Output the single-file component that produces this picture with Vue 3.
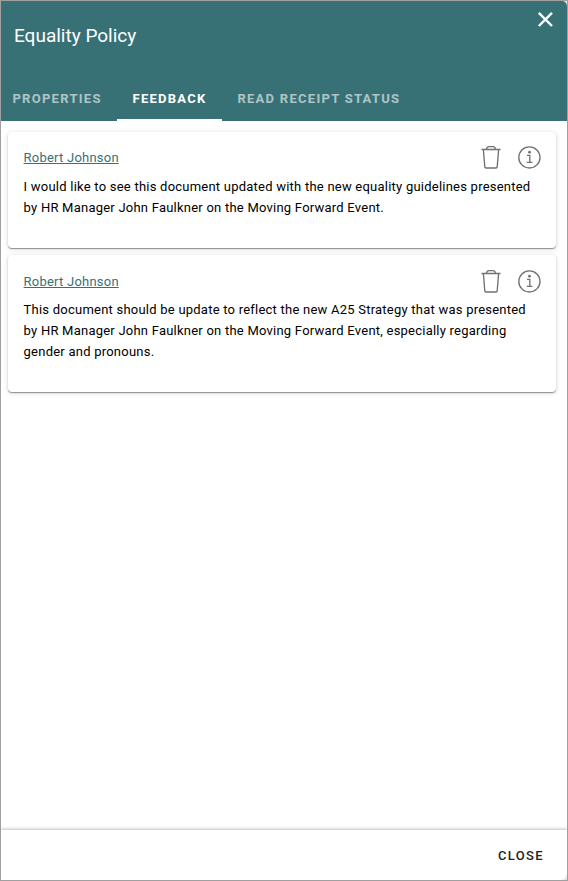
<script setup>
const tabs = [
  { label: 'Properties', active: false },
  { label: 'Feedback', active: true },
  { label: 'Read receipt status', active: false },
]

const feedback = [
  {
    author: 'Robert Johnson',
    lines: [
      'I would like to see this document updated with the new equality guidelines presented',
      'by HR Manager John Faulkner on the Moving Forward Event.',
    ],
  },
  {
    author: 'Robert Johnson',
    lines: [
      'This document should be update to reflect the new A25 Strategy that was presented',
      'by HR Manager John Faulkner on the Moving Forward Event, especially regarding',
      'gender and pronouns.',
    ],
  },
]
</script>

<template>
  <div class="frame">
    <section class="dialog">
      <header class="header">
        <div class="title-row">
          <h1 class="title">Equality Policy</h1>
          <button class="dismiss" aria-label="Close">
            <svg width="16" height="16" viewBox="0 0 16 16">
              <path d="M1.8 1.8 15 15M15 1.8 1.8 15" />
            </svg>
          </button>
        </div>
        <nav class="tabs">
          <a v-for="tab in tabs" :key="tab.label" class="tab" :class="{ active: tab.active }">{{ tab.label }}</a>
        </nav>
      </header>

      <main class="content">
        <article v-for="(item, i) in feedback" :key="i" class="card">
          <div class="card-head">
            <a class="author">{{ item.author }}</a>
            <div class="actions">
              <svg class="icon trash" width="20" height="24" viewBox="0 0 20 24">
                <path d="M0.5 4.5H19.5M5.2 4.5C5.8 2.4 6.6 1.6 8 1.6H12C13.4 1.6 14.2 2.4 14.8 4.5M2.4 4.8 3.8 21.9Q3.9 23 5 23H15Q16.1 23 16.2 21.9L17.6 4.8" />
              </svg>
              <svg class="icon info" width="24" height="24" viewBox="0 0 24 24">
                <circle cx="12.4" cy="12.4" r="10.6" />
                <path d="M10 10.3H12.8V17M9.8 17.3H15.4" />
                <circle class="dot" cx="12.5" cy="7.2" r="1.4" />
              </svg>
            </div>
          </div>
          <p class="message">
            <span v-for="line in item.lines" :key="line" class="line">{{ line }}</span>
          </p>
        </article>
      </main>

      <footer class="footer">
        <button class="close">Close</button>
      </footer>
    </section>
  </div>
</template>

<style>
body {
  margin: 0;
}
</style>

<style scoped>
.frame {
  box-sizing: border-box;
  width: 568px;
  height: 881px;
  border: 1px solid #a0a0a0;
  background: #e4e4e4;
  font-family: Roboto, "Liberation Sans", sans-serif;
  overflow: hidden;
}
.dialog {
  display: flex;
  flex-direction: column;
  height: 879px;
  background: #fff;
  border-radius: 0 5px 7px 0;
  overflow: hidden;
}
button {
  border: 0;
  padding: 0;
  background: none;
  font-family: inherit;
}
.header {
  display: flex;
  flex-direction: column;
  height: 120px;
  background: #377175;
  color: #fff;
}
.title-row {
  display: flex;
  justify-content: space-between;
  align-items: flex-start;
  height: 75px;
  padding: 0 14px 0 13px;
}
.title {
  margin: 23px 0 0;
  font-size: 19px;
  line-height: 24px;
  font-weight: 400;
}
.dismiss {
  width: 16px;
  height: 16px;
  margin-top: 10px;
}
.dismiss svg {
  display: block;
  fill: none;
  stroke: #fff;
  stroke-width: 2.4;
}
.tabs {
  display: flex;
  height: 45px;
  margin-left: -4px;
}
.tab {
  box-sizing: border-box;
  height: 45px;
  padding: 0 15.4px;
  line-height: 45px;
  font-size: 13px;
  font-weight: 700;
  letter-spacing: 1.28px;
  text-transform: uppercase;
  white-space: nowrap;
  color: rgba(255, 255, 255, 0.6);
}
.tab.active {
  color: #fff;
  border-bottom: 2px solid #fff;
}
.content {
  flex: 1;
  display: flex;
  flex-direction: column;
  gap: 7.6px;
  padding: 11px 11px 0 7px;
}
.card {
  padding: 13.4px 14.6px 30.2px 15.6px;
  border-radius: 4px;
  background: #fff;
  box-shadow: 0 1px 1px rgba(0, 0, 0, 0.38), 0 1px 5px rgba(0, 0, 0, 0.16);
}
.card-head {
  display: flex;
  justify-content: space-between;
  height: 30.2px;
}
.author {
  font-size: 13px;
  line-height: 25px;
  letter-spacing: 0.225px;
  color: #377175;
  text-decoration: underline;
}
.actions {
  display: flex;
  gap: 16px;
}
.icon {
  display: block;
  fill: none;
  stroke: #727272;
  stroke-width: 1.35;
}
.icon .dot {
  fill: #727272;
  stroke: none;
}
.message {
  margin: 0;
  font-size: 13px;
  line-height: 21px;
  letter-spacing: 0.23px;
  color: #000;
}
.line {
  display: block;
  white-space: nowrap;
}
.footer {
  display: flex;
  justify-content: flex-end;
  align-items: center;
  height: 50px;
  padding-right: 23px;
  background: #fff;
  box-shadow: 0 -1px 3px rgba(0, 0, 0, 0.25);
}
.close {
  font-size: 13px;
  font-weight: 500;
  letter-spacing: 1.34px;
  text-transform: uppercase;
  color: #222;
}
</style>
